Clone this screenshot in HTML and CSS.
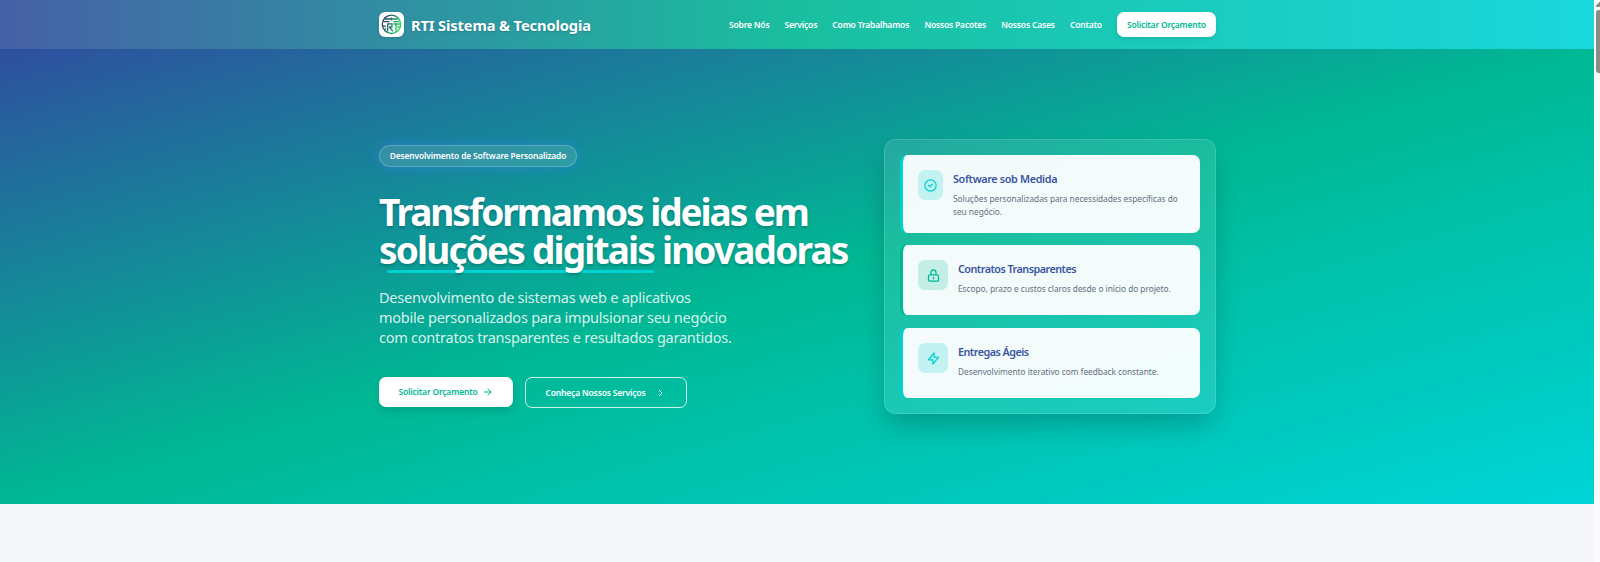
FILE: index.html
```html
<!DOCTYPE html>
<html lang="pt-BR">
<head>
<meta charset="utf-8">
<title>RTI Sistema &amp; Tecnologia</title>
<link rel="stylesheet" href="styles.css">
</head>
<body>
<div class="page">
  <header class="header">
    <div class="container header-inner">
      <a class="brand">
        <span class="logo">
          <svg viewBox="0 0 25 25" width="25" height="25" fill="none">
            <defs><linearGradient id="lg" gradientUnits="userSpaceOnUse" x1="3" x2="22" y1="8" y2="15"><stop offset=".1" stop-color="#2b3c5c"/><stop offset=".5" stop-color="#1c7a68"/><stop offset=".9" stop-color="#20d45c"/></linearGradient></defs>
            <g stroke="url(#lg)" stroke-width="1.3">
              <circle cx="12.500" cy="12.300" r="9.200"/>
              <path d="M6 7h13M4.500 9.700h6M14.500 9.700h6M8 11.800h5v3.200h-3M8.700 11.500v8M10.500 15l3.500 4.500M14.500 12h6.500M17 12v8M12.500 5.500v3M4 14.200h3M18.500 15h3.500M5.500 17h1.500"/>
            </g>
          </svg>
        </span>
        <span class="brand-name">RTI Sistema &amp; Tecnologia</span>
      </a>
      <nav class="nav">
        <a>Sobre Nós</a><a>Serviços</a><a>Como Trabalhamos</a><a>Nossos Pacotes</a><a>Nossos Cases</a><a>Contato</a>
        <a class="nav-cta">Solicitar Orçamento</a>
      </nav>
    </div>
  </header>
  <main class="hero">
    <div class="container hero-inner">
      <section class="copy">
        <span class="badge">Desenvolvimento de Software Personalizado</span>
        <h1 class="title"><span class="line tight">Transformamos ideias em</span><span class="line"><span class="mark">soluções digitais</span> inovadoras</span></h1>
        <p class="lead"><span class="line">Desenvolvimento de sistemas web e aplicativos</span><span class="line">mobile personalizados para impulsionar seu negócio</span><span class="line">com contratos transparentes e resultados garantidos.</span></p>
        <div class="actions">
          <a class="btn btn-solid">Solicitar Orçamento
            <svg width="10" height="10" viewBox="0 0 10 10" fill="none" stroke="currentColor" stroke-width="1" stroke-linecap="round" stroke-linejoin="round"><path d="M1.500 5h6.400M5 2l3 3-3 3"/></svg>
          </a>
          <a class="btn btn-line">Conheça Nossos Serviços
            <svg width="10" height="10" viewBox="0 0 10 10" fill="none" stroke="currentColor" stroke-width="1" stroke-linecap="round" stroke-linejoin="round"><path d="M4.300 2.300l2.700 2.700-2.700 2.700"/></svg>
          </a>
        </div>
      </section>
      <section class="panel">
        <article class="card card-tall">
          <span class="icon narrow cyan"><svg width="15" height="15" viewBox="0 0 24 24" fill="none" stroke="currentColor" stroke-width="2" stroke-linecap="round" stroke-linejoin="round"><path d="M9 12l2 2 4-4m6 2a9 9 0 11-18 0 9 9 0 0118 0z"/></svg></span>
          <div class="card-text"><h3>Software sob Medida</h3><p>Soluções personalizadas para necessidades específicas do<br>seu negócio.</p></div>
        </article>
        <article class="card card-green">
          <span class="icon green"><svg width="15" height="15" viewBox="0 0 24 24" fill="none" stroke="currentColor" stroke-width="2" stroke-linecap="round" stroke-linejoin="round"><path d="M12 15v2m-6 4h12a2 2 0 002-2v-6a2 2 0 00-2-2H6a2 2 0 00-2 2v6a2 2 0 002 2zm10-10V7a4 4 0 00-8 0v4h8z"/></svg></span>
          <div class="card-text"><h3>Contratos Transparentes</h3><p>Escopo, prazo e custos claros desde o início do projeto.</p></div>
        </article>
        <article class="card card-last">
          <span class="icon cyan"><svg width="15" height="15" viewBox="0 0 24 24" fill="none" stroke="currentColor" stroke-width="2" stroke-linecap="round" stroke-linejoin="round"><path d="M13 10V3L4 14h7v7l9-11h-7z"/></svg></span>
          <div class="card-text"><h3>Entregas Ágeis</h3><p>Desenvolvimento iterativo com feedback constante.</p></div>
        </article>
      </section>
    </div>
  </main>
  <div class="next"></div>
</div>
<div class="scrollbar"><span class="up"></span><span class="thumb"></span></div>
</body>
</html>
```
FILE: styles.css
```css
* { box-sizing: border-box; margin: 0; padding: 0; }
body { display: flex; height: 562px; overflow: hidden; font-family: "Noto Sans", "Open Sans", sans-serif; background: #f6f7fb; }
.page { width: 1594px; display: flex; flex-direction: column; }
.container { width: 837px; margin-left: 379px; }
.line { display: block; white-space: nowrap; }

.header { height: 49px; background: linear-gradient(90deg, #4660a6 0%, #1abf9f 50%, #1ad8dd 100%); }
.header-inner { height: 49px; display: flex; align-items: center; justify-content: space-between; }
.brand { display: flex; align-items: center; gap: 7px; }
.logo { width: 25px; height: 25px; border-radius: 6px; background: #fff; box-shadow: 0 1px 3px rgba(0,0,0,.15); }
.brand-name { font-size: 14.7px; font-weight: 700; letter-spacing: -.13px; color: #fff; white-space: nowrap; text-shadow: 0 1px 2px rgba(0,0,0,.2); }
.nav { display: flex; align-items: center; gap: 15.2px; font-size: 8.5px; font-weight: 600; letter-spacing: -.19px; color: #fff; white-space: nowrap; }
.nav-cta { height: 25px; width: 99px; line-height: 25px; text-align: center; border-radius: 7px; background: #fff; color: #00b894; box-shadow: 0 2px 4px rgba(0,0,0,.1); }

.hero { height: 455px; background: linear-gradient(164deg, #2e4f9f 0%, #00b894 50%, #00d4d8 100%); }
.hero-inner { display: flex; justify-content: space-between; padding-top: 90px; }
.copy { display: flex; flex-direction: column; align-items: flex-start; padding-top: 6px; width: 480px; }
.badge { height: 22px; width: 198px; line-height: 20px; text-align: center; border: 1px solid rgba(255,255,255,.2); border-radius: 11px; background: rgba(255,255,255,.12); box-shadow: 0 0 12px rgba(46,134,222,.75); color: #fff; font-size: 8.4px; font-weight: 600; letter-spacing: -.13px; white-space: nowrap; }
.title { margin-top: 26px; font-size: 37px; line-height: 38px; font-weight: 700; letter-spacing: -1.82px; color: #fff; text-shadow: 0 2px 3px rgba(0,0,0,.2); }
.tight { letter-spacing: -2.04px; }
.mark { position: relative; display: inline-block; z-index: 0; }
.mark::after { content: ""; position: absolute; z-index: -1; left: 8px; right: 0; bottom: -4px; height: 3px; border-radius: 2px; background: #00d2d3; }
.lead { margin-top: 18px; font-size: 14.5px; line-height: 20px; letter-spacing: -.24px; color: rgba(255,255,255,.85); }
.actions { display: flex; gap: 12px; margin-top: 30px; }
.btn { display: flex; align-items: center; border-radius: 7px; font-size: 8.5px; font-weight: 600; letter-spacing: -.18px; white-space: nowrap; }
.btn-solid { width: 134px; height: 30px; padding: 0 0 1px 19.5px; gap: 5px; background: #fff; color: #00b894; box-shadow: 0 4px 8px rgba(0,0,0,.12); }
.btn-line { width: 162px; height: 31px; padding-left: 19.5px; gap: 10px; border: 1px solid rgba(255,255,255,.8); color: #fff; }

.panel { width: 332px; height: 275px; padding: 15px; display: flex; flex-direction: column; gap: 12px; border: 1px solid rgba(255,255,255,.15); border-radius: 12px; background: rgba(255,255,255,.1); box-shadow: 0 14px 28px -4px rgba(0,0,0,.22); }
.card { height: 70px; display: flex; gap: 10px; padding: 15px; border-left: 3px solid #00d2d3; border-radius: 7px; background: rgba(255,255,255,.95); background-clip: padding-box; }
.card-tall { height: 78px; }
.card-green { border-left-color: #00b894; }
.card-last { margin-top: 1px; }
.icon { width: 30px; height: 30px; flex: none; display: flex; align-items: center; justify-content: center; border-radius: 7px; }
.narrow { width: 25px; }
.cyan { background: rgba(0,210,211,.2); color: #00d2d3; }
.green { background: rgba(0,184,148,.2); color: #00b894; }
.card-text { white-space: nowrap; }
.card h3 { font-size: 10.8px; line-height: 18px; font-weight: 600; letter-spacing: -.53px; color: #3a54a4; }
.card-tall h3 { letter-spacing: -.34px; }
.card p { font-size: 8.3px; line-height: 12.5px; margin-top: 5px; letter-spacing: -.02px; color: #636e80; }

.next { height: 58px; background: #f6f7fb; }
.scrollbar { width: 6px; height: 562px; background: #fafafa; display: flex; flex-direction: column; align-items: flex-end; gap: 3px; overflow: hidden; }
.up { width: 4px; height: 7px; background: linear-gradient(135deg, transparent 50%, #8b8b8b 50%); }
.thumb { width: 4px; height: 63px; border-radius: 3px 0 0 3px; background: #8b8b8b; }
```
